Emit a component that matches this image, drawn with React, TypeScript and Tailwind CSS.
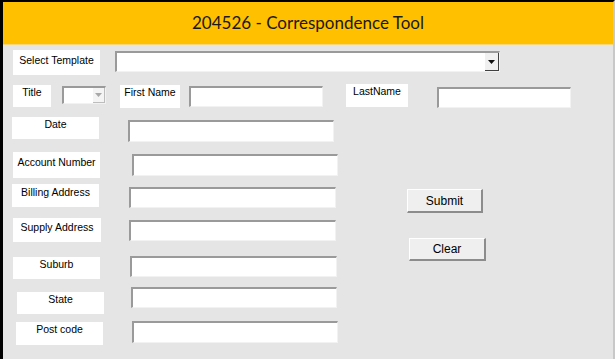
import React from "react";

// One label + textbox row on the left side of the form
interface IFieldRow {
  label: string;
  rowClass: string;
  labelClass: string;
  inputClass: string;
}

const fieldRows: IFieldRow[] = [
  {
    label: "Date",
    rowClass: "mt-0",
    labelClass: "ml-[9px] w-[87px] h-[22px] pt-0",
    inputClass: "ml-[29px] mt-[3px] w-[206px] h-[22px]",
  },
  {
    label: "Account Number",
    rowClass: "mt-[10px]",
    labelClass: "ml-[10px] w-[87px] h-[26px] pt-[3px]",
    inputClass: "ml-[32px] mt-[2px] w-[206px] h-[22px]",
  },
  {
    label: "Billing Address",
    rowClass: "mt-[6px]",
    labelClass: "ml-[9px] w-[87px] h-[23px] pt-[1px]",
    inputClass: "ml-[30px] mt-[3px] w-[207px] h-[21px]",
  },
  {
    label: "Supply Address",
    rowClass: "mt-[10px]",
    labelClass: "ml-[10px] w-[88px] h-[24px] pt-[2px]",
    inputClass: "ml-[28px] mt-[2px] w-[207px] h-[21px]",
  },
  {
    label: "Suburb",
    rowClass: "mt-[14px]",
    labelClass: "ml-[10px] mt-[1px] w-[87px] h-[22px] pt-0",
    inputClass: "ml-[30px] w-[207px] h-[21px]",
  },
  {
    label: "State",
    rowClass: "mt-[8px]",
    labelClass: "ml-[14px] mt-[5px] w-[87px] h-[22px] pt-0",
    inputClass: "ml-[27px] w-[206px] h-[21px]",
  },
  {
    label: "Post code",
    rowClass: "mt-[7px]",
    labelClass: "ml-[13px] mt-[1px] w-[87px] h-[23px] pt-0",
    inputClass: "ml-[29px] w-[206px] h-[22px]",
  },
];

// White caption box, text centred at the top
const Caption: React.FC<{ text: string; className: string }> = ({ text, className }) => (
  <div className={`bg-white text-center text-[10.5px] leading-[14px] text-black shrink-0 ${className}`}>
    {text}
  </div>
);

// Sunken white textbox
const TextBox: React.FC<{ className: string }> = ({ className }) => (
  <div
    className={`bg-white shrink-0 border-t-2 border-l-2 border-r border-b border-t-[#9a9a9a] border-l-[#9a9a9a] border-r-[#f2f2f2] border-b-[#f2f2f2] ${className}`}
  />
);

// Small down arrow used by the combo boxes
const DropArrow: React.FC<{ color: string }> = ({ color }) => (
  <svg width="7" height="4" viewBox="0 0 7 4">
    <polygon points="0,0 7,0 3.5,4" fill={color} />
  </svg>
);

const App: React.FC = () => {
  return (
    <div
      className="w-[615px] h-[359px] bg-[#e6e5e5] border-l-[3px] border-t-2 border-l-black border-t-black border-r-2 border-r-[#c8c8c8] overflow-hidden"
      style={{ fontFamily: '"Liberation Sans", Arial, sans-serif' }}
    >
      {/* Yellow title bar */}
      <header className="h-[43px] bg-[#ffc000] flex items-center justify-center border-b border-[#f5d77a]">
        <h1
          className="text-[17px] text-[#1a1a1a]"
          style={{ fontFamily: 'Lato, "Open Sans", sans-serif' }}
        >
          204526 - Correspondence Tool
        </h1>
      </header>

      {/* Template row */}
      <div className="flex items-start mt-[5px]">
        <Caption text="Select Template" className="ml-[10px] w-[87px] h-[25px] pt-[3px]" />
        <div className="ml-[15px] mt-[1px] w-[385px] h-[21px] bg-white flex justify-end border-t-2 border-l-2 border-t-[#9a9a9a] border-l-[#9a9a9a] border-r border-b border-r-[#f2f2f2] border-b-[#f2f2f2]">
          <div className="w-[14px] h-full bg-[#f0f0f0] flex items-center justify-center border-r border-b border-r-[#404040] border-b-[#404040]">
            <DropArrow color="#111" />
          </div>
        </div>
      </div>

      {/* Title / names row */}
      <div className="flex items-start mt-[9px]">
        <Caption text="Title" className="ml-[10px] mt-[1px] w-[38px] h-[22px] pt-0" />
        <div className="ml-[11px] mt-[2px] w-[44px] h-[18px] bg-white flex justify-end border-t-2 border-l-2 border-t-[#9a9a9a] border-l-[#9a9a9a] border-r border-b border-r-[#f2f2f2] border-b-[#f2f2f2]">
          <div className="w-[12px] h-full bg-[#f4f4f4] flex items-center justify-center border-r border-b border-r-[#bdbdbd] border-b-[#bdbdbd]">
            <DropArrow color="#a8a8a8" />
          </div>
        </div>
        <Caption text="First Name" className="ml-[14px] mt-[1px] w-[60px] h-[23px] pt-0" />
        <TextBox className="ml-[9px] mt-[2px] w-[134px] h-[21px]" />
        <Caption text="LastName" className="ml-[23px] w-[62px] h-[23px] pt-0" />
        <TextBox className="ml-[29px] mt-[3px] w-[134px] h-[21px]" />
      </div>

      {/* Remaining fields and buttons */}
      <div className="flex items-start mt-[9px]">
        <div className="w-[335px] flex flex-col">
          {fieldRows.map((row) => (
            <div key={row.label} className={`flex items-start ${row.rowClass}`}>
              <Caption text={row.label} className={row.labelClass} />
              <TextBox className={row.inputClass} />
            </div>
          ))}
        </div>

        <div className="ml-[69px] flex flex-col items-start">
          <button className="mt-[72px] w-[76px] h-[24px] bg-[#efefef] text-[12px] text-black border-t border-l border-t-white border-l-white border-r-2 border-b-2 border-r-[#8c8c8c] border-b-[#8c8c8c]">
            Submit
          </button>
          <button className="mt-[25px] ml-[2px] w-[77px] h-[23px] bg-[#efefef] text-[12px] text-black border-t border-l border-t-white border-l-white border-r-2 border-b-2 border-r-[#8c8c8c] border-b-[#8c8c8c]">
            Clear
          </button>
        </div>
      </div>
    </div>
  );
};

export default App;
